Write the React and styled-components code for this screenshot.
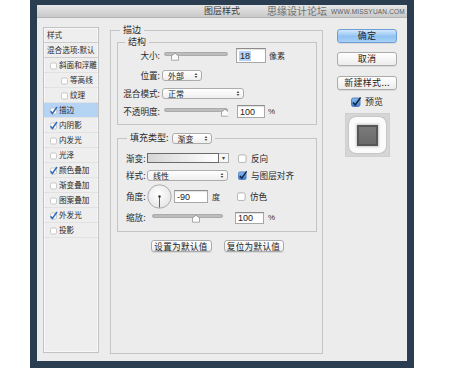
import React from 'react'
import styled, { createGlobalStyle } from 'styled-components'

const GlobalStyle = createGlobalStyle`
  html, body { margin:0; padding:0; background:#fff; }
  body { font-family:"Noto Sans CJK SC", "Noto Sans", sans-serif; color:#222; }
`

const Frame = styled.div`
  margin-left:30px;
  width:384px;
  height:368px;
  box-sizing:border-box;
  padding:5px 7px 7px;
  background:#2b3e51;
`

const Dialog = styled.div`
  height:100%;
  background:#ececec;
  display:flex;
  flex-direction:column;
`

const TitleBar = styled.div`
  height:13px;
  box-sizing:border-box;
  flex:none;
  display:grid;
  grid-template-columns:1fr auto 1fr;
  align-items:center;
  background:linear-gradient(#e6e6e6, #c9c9c9);
  border-bottom:1px solid #b4b4b4;
`

const Title = styled.div`
  font-size:9px;
  line-height:12px;
  color:#3a3a3a;
`

const Watermark = styled.div`
  justify-self:end;
  display:flex;
  align-items:center;
  gap:4px;
  padding-right:2px;
  color:#666;
`

const WmCn = styled.span`
  font-size:10px;
  line-height:12px;
  color:#707070;
`

const WmUrl = styled.span`
  font-family:"Liberation Sans", sans-serif;
  font-size:6.5px;
  letter-spacing:0.2px;
  color:#5c5c5c;
`

const Body = styled.div`
  flex:1;
  display:flex;
  align-items:flex-start;
  padding-left:6px;
`

const StyleList = styled.div`
  margin-top:9px;
  width:56px;
  height:326px;
  box-sizing:border-box;
  border:1px solid #c2c2c2;
  box-shadow:inset 0 0 0 1px #f8f8f8;
  background:#eeeeee;
`

const ListRow = styled.div`
  height:15px;
  box-sizing:border-box;
  display:flex;
  align-items:center;
  gap:1px;
  padding-left:${p => p.$indent}px;
  font-size:7.6px;
  line-height:10px;
  color:#2a2a2a;
  white-space:nowrap;
  background:${p => (p.$active ? '#b5d3f3' : 'transparent')};
  border-bottom:1px solid ${p => (p.$head ? '#cdcdcd' : '#e2e2e2')};
`

const Group = styled.fieldset`
  margin:${p => p.$margin || 0};
  padding:${p => p.$pad || 0};
  border:1px solid #c4c4c4;
  min-width:0;
  box-sizing:border-box;
`

const Legend = styled.legend`
  padding:0 3px;
  margin-left:${p => p.$offset}px;
  font-size:9px;
  line-height:12px;
  height:12px;
  color:#2a2a2a;
`

const LegendInner = styled.span`
  display:flex;
  align-items:center;
  gap:3px;
  height:12px;
`

const MainGroup = styled(Group)`
  margin:6px 0 0 11px;
  width:213px;
  height:330px;
  padding:0 5px 0 6px;
`

const Row = styled.div`
  display:flex;
  align-items:center;
  height:${p => p.$h}px;
  margin-top:${p => p.$mt}px;
  padding-left:${p => p.$pl || 0}px;
`

const Label = styled.span`
  flex:none;
  width:${p => p.$w}px;
  text-align:${p => p.$align || 'left'};
  margin-right:${p => p.$mr || 0}px;
  font-size:8.6px;
  line-height:11px;
  color:#2a2a2a;
  white-space:nowrap;
`

const Unit = styled.span`
  margin-left:${p => p.$ml || 3}px;
  font-size:8px;
  line-height:11px;
  color:#333;
  font-family:${p => (p.$latin ? '"Liberation Sans", sans-serif' : 'inherit')};
`

const Field = styled.div`
  flex:none;
  width:${p => p.$w}px;
  height:${p => p.$h}px;
  margin-left:${p => p.$ml || 0}px;
  box-sizing:border-box;
  border:1px solid #a8a8a8;
  border-top-color:#8c8c8c;
  background:#fff;
  box-shadow:inset 0 1px 1px rgba(0,0,0,0.12);
  display:flex;
  align-items:center;
  padding-left:2px;
  font-family:"Liberation Sans", sans-serif;
  font-size:9px;
  color:#222;
`

const Selected = styled.span`
  background:#b4d4fb;
  padding:0 1px;
`

const Select = styled.div`
  flex:none;
  width:${p => p.$w}px;
  height:11px;
  margin-left:${p => p.$ml || 0}px;
  box-sizing:border-box;
  border:1px solid #acacac;
  border-radius:3px;
  background:linear-gradient(#ffffff, #efefef);
  display:flex;
  align-items:center;
  justify-content:space-between;
  padding:0 3px 0 5px;
  font-size:8px;
  line-height:9px;
  color:#222;
`

const SliderBox = styled.svg`
  flex:none;
  display:block;
  margin-left:${p => p.$ml || 0}px;
`

const Swatch = styled.div`
  flex:none;
  display:flex;
  height:10px;
`

const SwatchBar = styled.div`
  width:72px;
  box-sizing:border-box;
  border:1px solid #6a6a6a;
  background:linear-gradient(to right, #d6d6d6, #ffffff);
`

const SwatchArrow = styled.div`
  width:10px;
  box-sizing:border-box;
  border:1px solid #adadad;
  border-left:none;
  background:#f7f7f7;
  font-size:6px;
  line-height:8px;
  text-align:center;
  color:#444;
`

const CheckWrap = styled.span`
  display:flex;
  align-items:center;
  gap:4px;
  margin-left:${p => p.$ml || 0}px;
  font-size:8.6px;
  line-height:11px;
  color:#2a2a2a;
  white-space:nowrap;
`

const BtnRow = styled.div`
  display:flex;
  justify-content:center;
  gap:12px;
  margin-top:8px;
`

const Button = styled.div`
  width:${p => p.$w}px;
  height:${p => p.$h}px;
  box-sizing:border-box;
  border:1px solid ${p => (p.$primary ? '#6f9fd2' : '#ababab')};
  border-radius:3px;
  background:${p => (p.$primary ? 'linear-gradient(#d3e8fd, #8fc2f3 55%, #a9d2f8)' : 'linear-gradient(#ffffff, #ececec)')};
  box-shadow:0 1px 0 rgba(0,0,0,0.08);
  display:flex;
  align-items:center;
  justify-content:center;
  font-size:${p => p.$fs || 8.6}px;
  line-height:10px;
  color:#222;
  letter-spacing:0.3px;
`

const RightCol = styled.div`
  margin-left:14px;
  width:60px;
  padding-top:11px;
  display:flex;
  flex-direction:column;
  align-items:center;
`

const Preview = styled.div`
  width:45px;
  height:44px;
  margin-top:6px;
  box-sizing:border-box;
  background:#d6d6d6;
  border:1px solid #cfcfcf;
  display:flex;
  align-items:center;
  justify-content:center;
`

const PreviewTile = styled.div`
  width:37px;
  height:36px;
  border-radius:7px;
  background:#fbfbfb;
  box-shadow:0 0 2px rgba(0,0,0,0.25);
  display:flex;
  align-items:center;
  justify-content:center;
`

const PreviewSquare = styled.div`
  width:21px;
  height:21px;
  box-sizing:border-box;
  border:2px solid #555;
  background:linear-gradient(#7a7a7a, #6a6a6a);
  box-shadow:0 0 2px 1px rgba(0,0,0,0.2);
`

function ListCheck({ checked }) {
  return (
    <svg width="9" height="9" viewBox="0 0 9 9">
      <rect x="1.5" y="2" width="6" height="6" rx="1.2" fill="#fff" stroke="#bdbdbd" strokeWidth="0.8" />
      {checked && <path d="M1.6 5.2 L3.4 7.4 L8 1" fill="none" stroke="#2f6cc0" strokeWidth="1.5" />}
    </svg>
  )
}

function BoxCheck({ checked, size = 9 }) {
  return (
    <svg width={size} height={size} viewBox="0 0 10 10">
      <defs>
        <linearGradient id="bc" x1="0" y1="0" x2="0" y2="1">
          <stop offset="0" stopColor="#8fbdf0" />
          <stop offset="1" stopColor="#3c7fd6" />
        </linearGradient>
      </defs>
      <rect x="0.5" y="1" width="8.5" height="8.5" rx="1.8" fill={checked ? 'url(#bc)' : '#fff'} stroke={checked ? '#3a6fb5' : '#9c9c9c'} strokeWidth="0.8" />
      {checked && <path d="M2 5.5 L4.2 8 L9.6 0.4" fill="none" stroke="#14233f" strokeWidth="1.6" />}
    </svg>
  )
}

function UpDown() {
  return (
    <svg width="4" height="7" viewBox="0 0 4 7">
      <path d="M0.5 3 L2 1 L3.5 3 Z M0.5 4 L2 6 L3.5 4 Z" fill="#555" />
    </svg>
  )
}

function Slider({ w, knob, ml }) {
  return (
    <SliderBox $ml={ml} width={w} height="10" viewBox={`0 0 ${w} 10`}>
      <rect x="0.5" y="1.5" width={w - 1} height="3" rx="1.5" fill="#bdbdbd" stroke="#8f8f8f" strokeWidth="0.6" />
      <path d={`M${knob - 3.5} 9.2 L${knob - 3.5} 5 L${knob} 2.2 L${knob + 3.5} 5 L${knob + 3.5} 9.2 Z`} fill="#fbfbfb" stroke="#8a8a8a" strokeWidth="0.7" />
    </SliderBox>
  )
}

function Dial() {
  return (
    <svg width="25" height="25" viewBox="0 0 25 25">
      <defs>
        <radialGradient id="dg" cx="0.45" cy="0.4" r="0.6">
          <stop offset="0" stopColor="#ffffff" />
          <stop offset="1" stopColor="#e6e6e6" />
        </radialGradient>
      </defs>
      <circle cx="12.5" cy="12.5" r="11.7" fill="url(#dg)" stroke="#9a9a9a" strokeWidth="0.8" />
      <line x1="12.5" y1="12.5" x2="12.5" y2="23.5" stroke="#555" strokeWidth="0.9" />
      <circle cx="12.5" cy="12.5" r="1.2" fill="#333" />
    </svg>
  )
}

const effects = [
  { name: '斜面和浮雕', on: false },
  { name: '等高线', on: false, sub: true },
  { name: '纹理', on: false, sub: true },
  { name: '描边', on: true, active: true },
  { name: '内阴影', on: true },
  { name: '内发光', on: false },
  { name: '光泽', on: false },
  { name: '颜色叠加', on: true },
  { name: '渐变叠加', on: false },
  { name: '图案叠加', on: false },
  { name: '外发光', on: true },
  { name: '投影', on: false },
]

export default function App() {
  return (
    <>
      <GlobalStyle />
      <Frame>
        <Dialog>
          <TitleBar>
            <span />
            <Title>图层样式</Title>
            <Watermark>
              <WmCn>思缘设计论坛</WmCn>
              <WmUrl>WWW.MISSYUAN.COM</WmUrl>
            </Watermark>
          </TitleBar>
          <Body>
            <StyleList>
              <ListRow $head $indent={3}>样式</ListRow>
              <ListRow $head $indent={3}>混合选项:默认</ListRow>
              {effects.map(e => (
                <ListRow key={e.name} $indent={e.sub ? 16 : 5} $active={e.active}>
                  <ListCheck checked={e.on} />
                  {e.name}
                </ListRow>
              ))}
            </StyleList>

            <MainGroup>
              <Legend $offset={3}>描边</Legend>
              <Group>
                <Legend $offset={7}>结构</Legend>
                <Row $h={15} $mt={0}>
                  <Label $w={42} $align="right">大小:</Label>
                  <Slider w={64} knob={11} ml={4} />
                  <Field $w={30} $h={15} $ml={8}><Selected>18</Selected></Field>
                  <Unit>像素</Unit>
                </Row>
                <Row $h={11} $mt={7}>
                  <Label $w={42} $align="right">位置:</Label>
                  <Select $w={40} $ml={2}>外部<UpDown /></Select>
                </Row>
                <Row $h={11} $mt={7}>
                  <Label $w={42} $align="right">混合模式:</Label>
                  <Select $w={82} $ml={2}>正常<UpDown /></Select>
                </Row>
                <Row $h={13} $mt={6} style={{ marginBottom: 6 }}>
                  <Label $w={42} $align="right">不透明度:</Label>
                  <Slider w={64} knob={61} ml={4} />
                  <Field $w={28} $h={13} $ml={9}>100</Field>
                  <Unit $latin>%</Unit>
                </Row>
              </Group>

              <Group $margin="7px 0 0">
                <Legend $offset={9}>
                  <LegendInner>
                    填充类型:
                    <Select $w={40}>渐变<UpDown /></Select>
                  </LegendInner>
                </Legend>
                <Row $h={10} $mt={9} $pl={8}>
                  <Label $w={21}>渐变:</Label>
                  <Swatch>
                    <SwatchBar />
                    <SwatchArrow>▾</SwatchArrow>
                  </Swatch>
                  <CheckWrap $ml={9}><BoxCheck />反向</CheckWrap>
                </Row>
                <Row $h={10} $mt={7} $pl={8}>
                  <Label $w={21}>样式:</Label>
                  <Select $w={81}>线性<UpDown /></Select>
                  <CheckWrap $ml={10}><BoxCheck checked />与图层对齐</CheckWrap>
                </Row>
                <Row $h={25} $mt={4} $pl={8}>
                  <Label $w={21}>角度:</Label>
                  <Dial />
                  <Field $w={34} $h={13} $ml={2}>-90</Field>
                  <Unit $ml={4}>度</Unit>
                  <CheckWrap $ml={17}><BoxCheck />仿色</CheckWrap>
                </Row>
                <Row $h={11} $mt={3} $pl={8} style={{ marginBottom: 8 }}>
                  <Label $w={26}>缩放:</Label>
                  <Slider w={71} knob={44} />
                  <Field $w={29} $h={12} $ml={12}>100</Field>
                  <Unit $ml={4} $latin>%</Unit>
                </Row>
              </Group>

              <BtnRow>
                <Button $w={61} $h={12}>设置为默认值</Button>
                <Button $w={60} $h={12}>复位为默认值</Button>
              </BtnRow>
            </MainGroup>

            <RightCol>
              <Button $primary $w={60} $h={14} $fs={9}>确定</Button>
              <Button $w={60} $h={14} $fs={9} style={{ marginTop: 9 }}>取消</Button>
              <Button $w={60} $h={14} $fs={9} style={{ marginTop: 10 }}>新建样式...</Button>
              <CheckWrap style={{ marginTop: 6, fontSize: 9 }}><BoxCheck checked size={10} />预览</CheckWrap>
              <Preview>
                <PreviewTile>
                  <PreviewSquare />
                </PreviewTile>
              </Preview>
            </RightCol>
          </Body>
        </Dialog>
      </Frame>
    </>
  )
}
